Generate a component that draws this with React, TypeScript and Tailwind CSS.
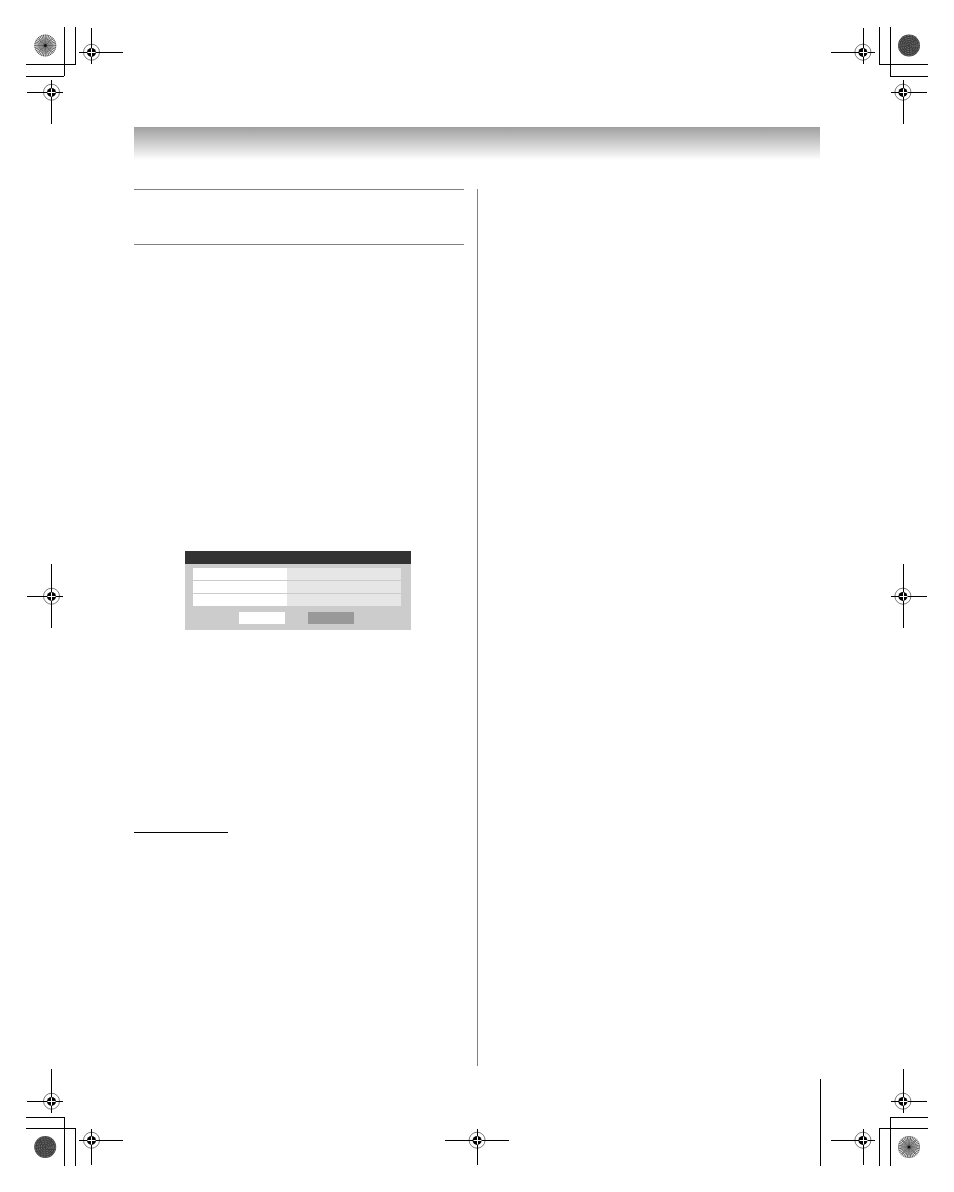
const rows = ['first', 'second', 'third'];

type MarkProps = {
  cx: number;
  cy: number;
  // ends of the horizontal and the vertical hair line
  x1: number;
  x2: number;
  y1: number;
  y2: number;
  ringX?: number;
};

function RegistrationMark({ cx, cy, x1, x2, y1, y2, ringX = cx + 0.5 }: MarkProps) {
  return (
    <g>
      <circle cx={ringX} cy={cy + 0.2} r="8" fill="none" stroke="#555" strokeWidth="0.8" />
      <path d={`M${x1} ${cy + 0.5}H${x2}M${cx + 0.5} ${y1}V${y2}`} stroke="#000" />
      <circle cx={ringX} cy={cy + 0.4} r="4.5" fill="#000" />
      <path
        d={`M${cx - 3.5} ${cy + 0.5}h8M${cx + 0.5} ${cy - 3.5}v8`}
        stroke="#fff"
      />
    </g>
  );
}

const rays = Array.from({ length: 36 }, (_, i) => (i * Math.PI) / 18);

function StarTarget({ cx, cy }: { cx: number; cy: number }) {
  return (
    <g>
      <circle cx={cx} cy={cy} r="10.6" fill="#fff" stroke="#888" strokeWidth="0.6" />
      {rays.map((a) => (
        <path
          key={a}
          d={`M${cx} ${cy}L${cx + 11 * Math.cos(a)} ${cy + 11 * Math.sin(a)}`}
          stroke="#222"
          strokeWidth="0.7"
        />
      ))}
      <path
        d={`M${cx} ${cy - 10}L${cx + 3} ${cy - 3}L${cx + 10} ${cy}L${cx + 3} ${cy + 3}L${cx} ${cy + 10}L${cx - 3} ${cy + 3}L${cx - 10} ${cy}L${cx - 3} ${cy - 3}Z`}
        fill="#aaa"
        fillOpacity="0.55"
      />
      <path
        d={`M${cx - 7} ${cy - 7}L${cx + 7} ${cy + 7}M${cx + 7} ${cy - 7}L${cx - 7} ${cy + 7}M${cx - 8} ${cy}h16M${cx} ${cy - 8}v16`}
        stroke="#555"
        strokeWidth="0.6"
      />
      <circle cx={cx} cy={cy} r="1.5" fill="#111" />
    </g>
  );
}

function DarkTarget({ cx, cy }: { cx: number; cy: number }) {
  return (
    <g>
      <circle cx={cx} cy={cy} r="11" fill="#3c3c3c" />
      {[2, 4, 6, 8, 10].map((r) => (
        <circle key={r} cx={cx} cy={cy} r={r} fill="none" stroke="#858585" strokeWidth="0.8" strokeDasharray="2 1" />
      ))}
      <path
        d={`M${cx - 7} ${cy - 7}l14 14M${cx + 7} ${cy - 7}l-14 14`}
        stroke="#444"
        strokeWidth="0.6"
      />
    </g>
  );
}

function TopMarks() {
  return (
    <div className="flex justify-between" aria-hidden="true">
      <svg width="134" height="127" viewBox="0 0 134 127">
        <StarTarget cx={45.3} cy={45.5} />
        <path d="M64.5 27V76M75.5 27V65M26 64.5H76M26 76.5H64" stroke="#000" fill="none" />
        <RegistrationMark cx={91} cy={52} x1={79} x2={123} y1={28} y2={64} />
        <RegistrationMark cx={51} cy={92} x1={27} x2={63} y1={80} y2={124} />
      </svg>
      <svg width="134" height="127" viewBox="820 0 134 127">
        <DarkTarget cx={909} cy={45.5} />
        <path d="M879.5 27V65M890.5 27V77M879 64.5H928M890 76.5H928" stroke="#000" fill="none" />
        <RegistrationMark cx={863} cy={52} x1={831} x2={875} y1={28} y2={64} ringX={862.9} />
        <RegistrationMark cx={903} cy={92} x1={891} x2={927} y1={80} y2={124} ringX={902.9} />
      </svg>
    </div>
  );
}

function BottomMarks() {
  return (
    <div className="flex justify-between" aria-hidden="true">
      <svg width="134" height="126" viewBox="0 1066 134 126">
        <DarkTarget cx={45.2} cy={1147} />
        <path d="M26 1117.5H65M26 1128.5H76M64.5 1117V1166M75.5 1128V1166" stroke="#000" fill="none" />
        <RegistrationMark cx={51} cy={1101} x1={27} x2={63} y1={1069} y2={1113} />
        <RegistrationMark cx={91} cy={1140} x1={79} x2={123} y1={1129} y2={1165} />
      </svg>
      <svg width="134" height="126" viewBox="410 1066 134 126">
        <RegistrationMark cx={477} cy={1140} x1={445} x2={509} y1={1129} y2={1165} ringX={477.1} />
      </svg>
      <svg width="134" height="126" viewBox="820 1066 134 126">
        <StarTarget cx={909} cy={1147} />
        <path
          d="M820.5 1079V1166M890 1117.5H928M879 1128.5H928M890.5 1117V1166M879.5 1128V1166"
          stroke="#000"
          fill="none"
        />
        <RegistrationMark cx={903} cy={1101} x1={891} x2={927} y1={1069} y2={1113} ringX={902.9} />
        <RegistrationMark cx={863} cy={1140} x1={831} x2={875} y1={1129} y2={1165} ringX={862.9} />
      </svg>
    </div>
  );
}

function SettingsPanel() {
  return (
    <div className="w-[226px] bg-[#ccc]">
      <div className="h-[13px] bg-[#333]" />
      <div className="pt-1 pb-1.5 pl-2 pr-2.5">
        <table className="w-full table-fixed border-separate border-spacing-0" aria-label="Settings">
          <colgroup>
            <col className="w-[94px]" />
            <col />
          </colgroup>
          <tbody>
            {rows.map((row) => (
              <tr key={row} className="h-[13px]">
                <td className="border-b border-[#ccc] bg-white p-0" />
                <td className="border-b border-[#ccc] bg-[#e6e6e6] p-0" />
              </tr>
            ))}
          </tbody>
        </table>
        <div className="mt-[5px] flex gap-[23px] pl-[46px]">
          <button type="button" aria-label="Confirm" className="h-3 w-[46px] bg-white" />
          <button type="button" aria-label="Cancel" className="h-3 w-[46px] bg-[#999]" />
        </div>
      </div>
    </div>
  );
}

export default function App() {
  return (
    <div className="flex min-h-screen flex-col bg-white font-['Liberation_Sans',sans-serif]">
      <TopMarks />

      <div className="flex flex-1 items-center">
        <svg className="shrink-0" width="134" height="65" viewBox="0 564 134 65" aria-hidden="true">
          <RegistrationMark cx={51} cy={596} x1={27} x2={63} y1={564} y2={628} />
        </svg>

        <main className="flex min-w-0 flex-1 flex-col self-stretch">
          <header className="h-[33px] bg-linear-to-b from-[#a0a0a0] to-white" />

          <div className="mt-[29px] flex flex-1">
            <section className="w-1/2 pr-[13px]">
              <div className="h-14 border-y border-[#808080]" />
              <div className="mt-[306px] pl-[51px]">
                <SettingsPanel />
              </div>
              <hr className="mt-[202px] w-[94px] border-black" />
            </section>
            <section className="w-1/2 border-l border-[#808080]" />
          </div>
        </main>

        <svg className="shrink-0" width="134" height="65" viewBox="820 564 134 65" aria-hidden="true">
          <RegistrationMark cx={903} cy={596} x1={891} x2={927} y1={564} y2={628} ringX={902.9} />
        </svg>
      </div>

      <BottomMarks />
    </div>
  );
}
